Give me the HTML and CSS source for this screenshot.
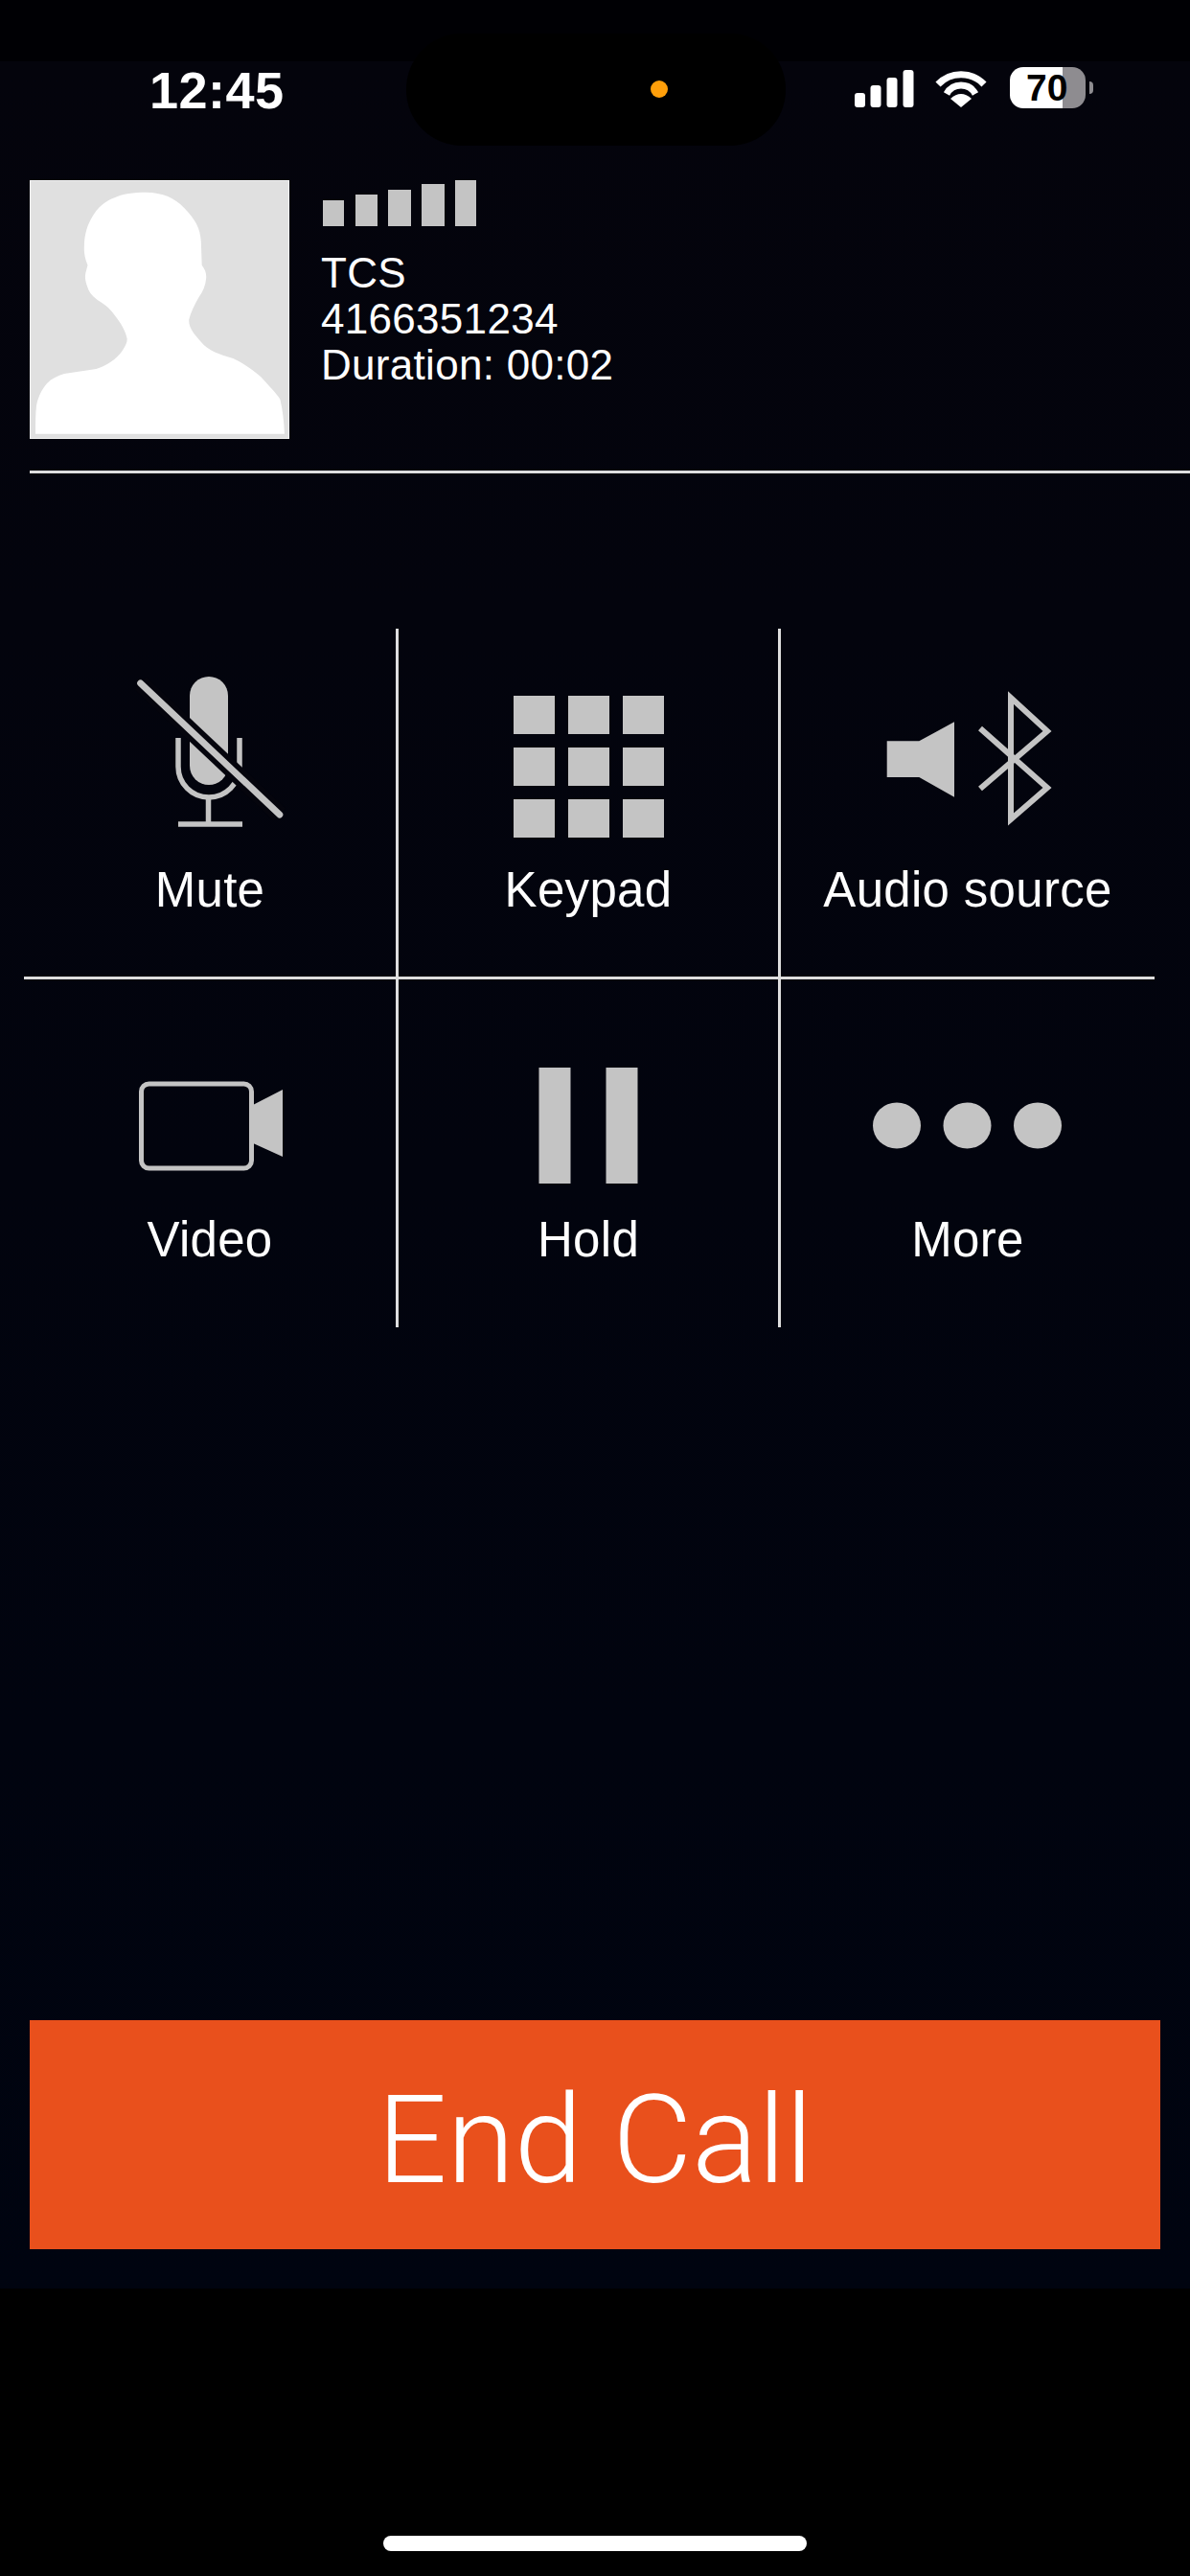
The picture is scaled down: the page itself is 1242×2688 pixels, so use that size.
FILE: index.html
```html
<!DOCTYPE html>
<html lang="en">
  <head>
    <meta charset="UTF-8" />
    <meta name="viewport" content="width=device-width, initial-scale=1.0" />
    <title>Call</title>
    <link rel="stylesheet" href="styles.css">
  </head>
  <body>
    <div class="top-band"></div>
    <div class="island"><span class="mic-dot"></span></div>

    <div class="app">
      <div class="status">
        <span class="time">12:45</span>
        <svg class="signal" viewBox="891 73 63 39">
          <rect x="892" y="97" width="11" height="15" rx="3" />
          <rect x="908.5" y="89" width="11" height="23" rx="3" />
          <rect x="925.5" y="81" width="11" height="31" rx="3" />
          <rect x="942.5" y="73" width="11" height="39" rx="3" />
        </svg>
        <svg class="wifi" viewBox="975 72 56 41">
          <path class="wifi-arc" d="M979 88 A 33 33 0 0 1 1027 88" />
          <path class="wifi-arc" d="M988 98 A 17 17 0 0 1 1018 98" />
          <path d="M1003 112 L992 103 Q1003 93 1014 103 Z" />
        </svg>
        <div class="battery">70</div>
      </div>

      <div class="caller">
        <svg class="avatar" viewBox="31 188 271 270">
          <rect class="avatar-bg" x="31.5" y="188.5" width="270" height="269" />
          <path class="avatar-person" d="M152 200.7 C170 200.7 183 207 192 216.7 C204 229 209 238 209.8 252 L210.7 276.7 C214 281 215.5 285 215.2 290 C214.5 298 212 304 207.6 310 C203 318 199 326 197.3 333.3 C196.5 342 203 349 209.8 356.7 C217 366 230 370 243.3 374 C254 379 264 386 272.3 393.3 C281 403 288 410 292.4 416.7 C295 428 296.5 440 296.9 452.7 L37 452.7 C37 442 37 432 38 423.3 C40 413 44 406 49.1 400 C54 395 60 392 67 390 L100.4 385 C112 381 121 375 127.2 366.7 C131 361 133 357 132.6 353.3 C131 345 126 337 120.5 330 C116 323 110 318 104.9 315 C97 310 93 305 91.5 300 C89 294 88.5 290 89.3 285 L91.5 276.7 C88 268 87.5 262 87.9 256.7 C88 245 91 235 96 226.7 C102 216 110 210 118.3 206.7 C128 202 140 200.7 152 200.7 Z" />
        </svg>
        <div class="caller-info">
          <svg class="strength" viewBox="337 188 161 48">
            <rect x="337" y="209" width="22" height="27" />
            <rect x="371" y="203" width="23" height="33" />
            <rect x="405" y="198" width="24" height="38" />
            <rect x="440" y="192" width="24" height="44" />
            <rect x="475" y="188" width="22" height="48" />
          </svg>
          <div class="caller-line">TCS</div>
          <div class="caller-line">4166351234</div>
          <div class="caller-line">Duration: 00:02</div>
        </div>
      </div>
      <div class="divider"></div>

      <div class="actions">
        <div class="action">
          <svg class="action-icon" viewBox="119 700 200 180">
            <path class="line" d="M186 770 V800 A32 32 0 0 0 250 800 V770" />
            <rect x="198" y="706" width="40" height="113" rx="20" />
            <path class="line" d="M217.5 830 V860 M186 860 H253" />
            <path class="cut" d="M146.7 713 L291.8 850" />
            <path class="slash" d="M146.7 713 L291.8 850" />
          </svg>
          <span class="action-label">Mute</span>
        </div>
        <div class="action">
          <svg class="action-icon" viewBox="514 700 200 180">
            <rect x="536" y="726" width="43" height="40" />
            <rect x="593" y="726" width="43" height="40" />
            <rect x="650" y="726" width="43" height="40" />
            <rect x="536" y="780" width="43" height="40" />
            <rect x="593" y="780" width="43" height="40" />
            <rect x="650" y="780" width="43" height="40" />
            <rect x="536" y="834" width="43" height="40" />
            <rect x="593" y="834" width="43" height="40" />
            <rect x="650" y="834" width="43" height="40" />
          </svg>
          <span class="action-label">Keypad</span>
        </div>
        <div class="action">
          <svg class="action-icon" viewBox="910 700 200 180">
            <polygon points="925.7,773.3 959.3,773.3 996,753.3 996,831.7 959.3,811 925.7,811" />
            <path class="bluetooth" d="M1023 760 L1093 822 L1055 855 V728 L1093 763 L1023 823" />
          </svg>
          <span class="action-label">Audio source</span>
        </div>
        <div class="action">
          <svg class="action-icon" viewBox="119 1110 200 126">
            <rect class="video-body" x="147.5" y="1132" width="115" height="88" rx="8" />
            <polygon points="262,1155 295,1138 295,1208 262,1193" />
          </svg>
          <span class="action-label">Video</span>
        </div>
        <div class="action">
          <svg class="action-icon" viewBox="514 1110 200 126">
            <rect x="562.5" y="1115" width="33" height="121" />
            <rect x="632.5" y="1115" width="33" height="121" />
          </svg>
          <span class="action-label">Hold</span>
        </div>
        <div class="action">
          <svg class="action-icon" viewBox="910 1110 200 126">
            <ellipse cx="936" cy="1175.5" rx="25" ry="24" />
            <ellipse cx="1009.5" cy="1175.5" rx="25" ry="24" />
            <ellipse cx="1083" cy="1175.5" rx="25" ry="24" />
          </svg>
          <span class="action-label">More</span>
        </div>
      </div>

      <button class="end-call">End Call</button>
    </div>

    <div class="bottom-area">
      <div class="home-bar"></div>
    </div>
  </body>
</html>
```

FILE: styles.css
```css
/* Global Styles */
* {
  box-sizing: border-box;
  margin: 0;
  padding: 0;
}
body {
  position: relative;
  width: 1242px;
  height: 2688px;
  background-color: #000;
  font-family: "Liberation Sans", Arial, sans-serif;
  color: #fff;
  overflow: hidden;
}
.top-band {
  height: 64px;
  background-color: #000004;
}
.island {
  position: absolute;
  top: 35px;
  left: 424px;
  width: 396px;
  height: 117px;
  border-radius: 58px;
  background-color: #000;
}
.mic-dot {
  position: absolute;
  top: 49px;
  left: 255px;
  width: 18px;
  height: 18px;
  border-radius: 50%;
  background-color: #ff9f0a;
}
.app {
  display: flex;
  flex-direction: column;
  height: 2324px;
  background: linear-gradient(to bottom, #04040c, #000410);
}

/* Status bar */
.status {
  display: flex;
  align-items: flex-start;
  height: 124px;
  padding-left: 156px;
}
.time {
  margin-right: auto;
  font-size: 54px;
  font-weight: 700;
  line-height: 60px;
  letter-spacing: 0.5px;
}
.signal {
  width: 63px;
  height: 39px;
  margin-top: 9px;
  fill: #fff;
}
.wifi {
  width: 56px;
  height: 41px;
  margin: 8px 0 0 21px;
  fill: #fff;
}
.wifi-arc {
  fill: none;
  stroke: #fff;
  stroke-width: 7;
}
.battery {
  position: relative;
  width: 79px;
  height: 43px;
  margin: 6px 109px 0 23px;
  padding-left: 17px;
  border-radius: 14px;
  background: linear-gradient(to right, #fff 70%, #8e8c90 70%);
  color: #000;
  font-size: 39px;
  font-weight: 700;
  line-height: 43px;
}
.battery::after {
  content: "";
  position: absolute;
  top: 15px;
  right: -8px;
  width: 4px;
  height: 13px;
  border-radius: 0 6px 6px 0;
  background-color: #8e8c90;
}

/* Caller */
.caller {
  display: flex;
  padding-left: 31px;
}
.avatar {
  width: 271px;
  height: 270px;
}
.avatar-bg {
  fill: #e0e0e0;
  stroke: #f2f2f2;
}
.avatar-person {
  fill: #fff;
}
.caller-info {
  margin-left: 33px;
}
.strength {
  display: block;
  width: 161px;
  height: 48px;
  margin: 0 0 25px 2px;
  fill: #c4c4c4;
}
.caller-line {
  font-size: 44px;
  line-height: 48px;
  letter-spacing: 0.3px;
}
.divider {
  height: 3px;
  margin: 33px 0 0 31px;
  background-color: #dedede;
}

/* Call actions */
.actions {
  display: grid;
  grid-template-columns: 391px 399px 390px;
  grid-template-rows: 366px 363px;
  width: 1180px;
  margin: 162px 0 0 25px;
}
.action {
  display: flex;
  flex-direction: column;
  align-items: center;
  padding-top: 44px;
  border-right: 3px solid #dedede;
}
.action:nth-child(-n + 3) {
  border-bottom: 3px solid #dedede;
}
.action:nth-child(3n) {
  border-right: none;
}
.action:nth-child(n + 4) {
  padding-top: 87px;
}
.action-icon {
  flex: none;
  width: 200px;
  height: 180px;
  fill: #c4c4c4;
}
.action:nth-child(n + 4) .action-icon {
  height: 126px;
}
.action-label {
  margin-top: 21px;
  font-size: 51px;
  line-height: 56px;
  letter-spacing: 0.3px;
}
.action:nth-child(n + 4) .action-label {
  margin-top: 31px;
}
.line {
  fill: none;
  stroke: #c4c4c4;
  stroke-width: 5.5;
}
.cut {
  fill: none;
  stroke: #05050d;
  stroke-width: 18;
}
.slash {
  fill: none;
  stroke: #c4c4c4;
  stroke-width: 7;
  stroke-linecap: round;
}
.bluetooth {
  fill: none;
  stroke: #c4c4c4;
  stroke-width: 6;
}
.video-body {
  fill: none;
  stroke: #c4c4c4;
  stroke-width: 5;
}

/* End call */
.end-call {
  height: 239px;
  margin: auto 31px 41px;
  padding-top: 10px;
  border: none;
  background-color: #e9501c;
  color: #fff;
  font-family: Roboto, "Liberation Sans", sans-serif;
  font-size: 128px;
  font-weight: 300;
}

/* Home indicator */
.bottom-area {
  padding-top: 258px;
}
.home-bar {
  width: 442px;
  height: 16px;
  margin: 0 auto;
  border-radius: 8px;
  background-color: #fff;
}
```
